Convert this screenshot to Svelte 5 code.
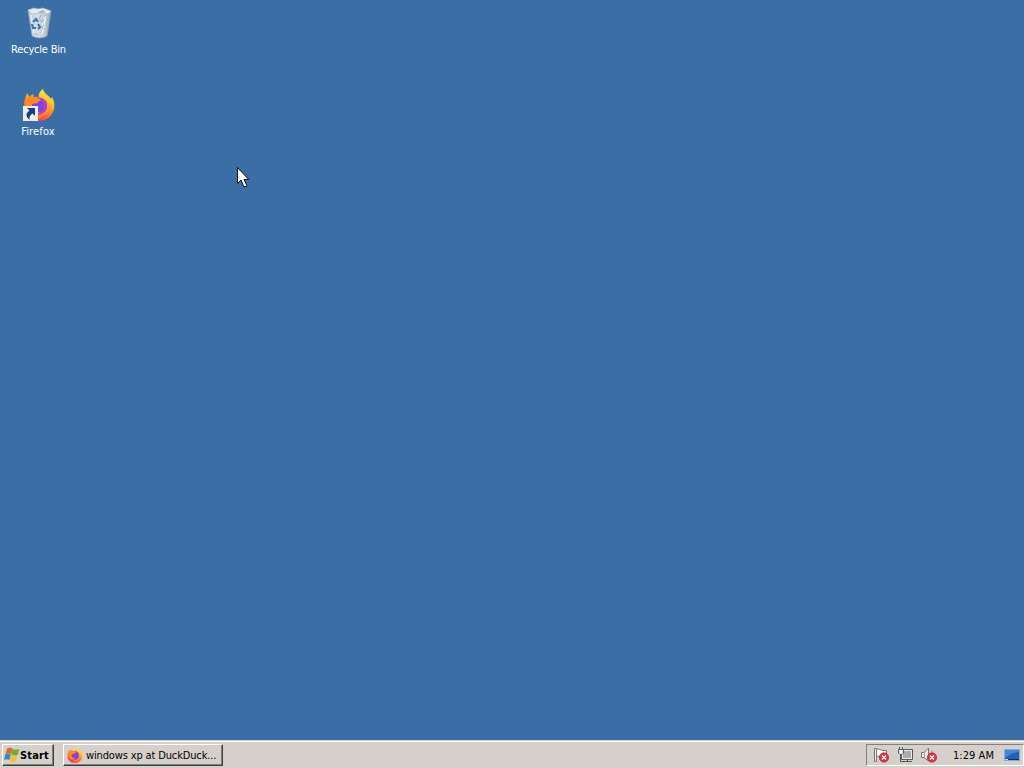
<script>
  let time = $state('1:29 AM');
</script>

{#snippet firefox(size)}
  <svg class="firefox" width={size} height={size} viewBox="0 0 32 32">
    <defs>
      <linearGradient id="flame{size}" x1=".8" y1="0" x2=".3" y2="1">
        <stop offset="0" stop-color="#fff04a" />
        <stop offset=".35" stop-color="#ffbd2b" />
        <stop offset=".62" stop-color="#ff7a2d" />
        <stop offset="1" stop-color="#ef2a62" />
      </linearGradient>
    </defs>
    <path fill="url(#flame{size})" d="M3 7C4 4 5 4 6 8L10 5L11 9C13 7 15 8 16 9C15 5 17 2 20 0C21 5 26 6 28 10L29 8C32 13 32 19 30 23C27 29 22 32 16 32C7 32 0 25 1 17C1 12 2 10 3 7Z" />
    <path fill="#ff9a28" d="M22 10C27 15 27 22 22 26C19 29 15 30 11 29C17 28 22 23 22 17Z" opacity=".75" />
    <path fill="#7d45dc" d="M12 9C19 7 24 11 24 17C24 22 20 25 16 25C11 25 8 21 8 17Q8 12 12 9Z" />
    <path fill="#b53bd7" d="M13 9C19 8 24 12 24 17C24 22 20 25 16 25L21 20C22 15 19 11 13 9Z" />
    <path fill="#ff8b20" d="M2 9L6 8L10 5L11 9C14 8 16 9 18 11L14 14L9 15C9 20 12 23 17 23C13 27 6 25 3 20Z" />
  </svg>
{/snippet}

{#snippet errorBadge()}
  <circle cx="11" cy="10.5" r="4.7" fill="#d93341" stroke="#b82632" stroke-width=".7" />
  <path d="M9 8.5L13 12.5M13 8.5L9 12.5" stroke="#fff" stroke-width="1.5" />
{/snippet}

<div class="desktop">
  <main>
    <div class="shortcut">
      <svg width="32" height="32" viewBox="0 0 32 32">
        <defs>
          <linearGradient id="bin" x1="0" x2="1">
            <stop offset="0" stop-color="#b9cbd8" />
            <stop offset=".4" stop-color="#d5e0e6" />
            <stop offset=".75" stop-color="#bac9d2" />
            <stop offset="1" stop-color="#8fa8b9" />
          </linearGradient>
        </defs>
        <path d="M5 3L28 4L24 29Q17 33 9 29Z" fill="url(#bin)" stroke="#8ca8bd" stroke-width=".8" />
        <path d="M5 3L11 1L15 2L20 1L28 4L25 7L18 6L9 7Z" fill="#e5ecee" stroke="#a6b9c5" stroke-width=".7" />
        <path d="M10 3L15 5L20 3L23 5L17 6Z" fill="#a5b5bf" />
        <path d="M8 8L11 27M23 9L19 28M20 10L23 13L19 17L22 20M13 23L17 20L20 25" stroke="#f1f5f6" fill="none" />
        <path d="M18 8L16 12L20 15M21 18L18 23M11 26L15 28" stroke="#889fae" fill="none" opacity=".65" />
        <g fill="none" stroke="#3e70b6" stroke-width="2.2">
          <path d="M10 15L13 12L15 15" />
          <path d="M9 17L10 21L13 21" />
          <path d="M15 17L17 20L15 22" />
        </g>
      </svg>
      <span class="bin-label">Recycle Bin</span>
    </div>
    <div class="shortcut">
      <div class="app-icon">
        {@render firefox(32)}
        <svg class="link" width="15" height="15" viewBox="0 0 15 15">
          <path fill="#eceef2" d="M0 0H15V15H0Z" />
          <path fill="#163e80" d="M4 2H12V10L9.5 7.5C7 9 6 11 6.5 14C2 10 3 7 6.5 4.8Z" />
        </svg>
      </div>
      <span class="fox-label">Firefox</span>
    </div>
    <svg class="cursor" width="13" height="22" viewBox="0 0 13 22">
      <path d="M.5 .5V16.5L4 13L7 20L10 19L7 12.5H11.7Z" fill="#fff" stroke="#071321" />
    </svg>
  </main>

  <footer>
    <button class="start">
      <svg width="16" height="16" viewBox="0 0 16 16">
        <path fill="#e26a25" d="M3 1.5C5 .2 6.8 .5 8.6 1.6L7.2 7C5 6 3.4 6 1.5 7Z" />
        <path fill="#70ad38" d="M8.8 2C11 3.1 13 3 15.5 2L13.8 8C11.5 9 9.6 8.6 7.3 7.3Z" />
        <path fill="#3c88c5" d="M1.3 7.3C3 6.3 5.1 6.4 6.9 7.5L5.3 13C3.4 12 1.8 12 0 13Z" />
        <path fill="#f3c238" d="M7.1 7.8C9 8.9 11 9.2 13.5 8.3L11.8 14.3C9.4 15.3 7.7 15 5.5 13.7Z" />
      </svg>
      <span>Start</span>
    </button>
    <button class="task">
      {@render firefox(16)}
      <span>windows xp at DuckDuck...</span>
    </button>
    <section class="tray">
      <svg width="16" height="16" viewBox="0 0 16 16">
        <path d="M1.5 1.5V14.5H3.5V1.5Z" fill="#eee" stroke="#747474" />
        <path d="M3.5 2.5C6 1 8 3.5 10 3.5H13.5V10H9C7 10 5 8.5 3.5 9.5Z" fill="#fff" stroke="#777" />
        {@render errorBadge()}
      </svg>
      <svg width="16" height="16" viewBox="0 0 16 16">
        <path d="M4.5 2.5H15.5V12.5H4.5Z" fill="#8b9290" stroke="#555957" />
        <path d="M5.5 3.5H14.5V11.5H5.5Z" fill="#a7adab" stroke="#eee" />
        <path d="M6 14.5H15M10.5 12V15M3.5 7V14.5H6" stroke="#555" fill="none" />
        <path d="M1.5 2.5H6.5V6L5 7.5H3L1.5 6Z" fill="#eee" stroke="#555" />
        <path d="M2.5 0V3M5.5 0V3" stroke="#555" />
      </svg>
      <svg width="16" height="16" viewBox="0 0 16 16">
        <path d="M.5 5.5H3L7.5 1V14L3 10.5H.5Z" fill="#eee" stroke="#777" />
        <path d="M3.5 5.5V10.5" stroke="#999" />
        <path d="M10 3Q12 5 12 7" fill="none" stroke="#999" />
        {@render errorBadge()}
      </svg>
      <time>{time}</time>
      <svg class="show-desktop" width="16" height="16" viewBox="0 0 16 16">
        <path d="M.5 2.5H15.5V13.5H.5Z" fill="#245eb5" stroke="#83a9d5" />
        <path d="M1 3H15V5C10 5 5 8 1 11Z" fill="#4686d0" />
        <path d="M1 12H15V13H1Z" fill="#172f56" />
        <path d="M1 12H4V13H1Z" fill="#bce0e2" />
      </svg>
    </section>
  </footer>
</div>

<style>
  :global(body) { margin: 0; overflow: hidden; }
  .desktop {
    width: 1024px;
    height: 768px;
    display: flex;
    flex-direction: column;
    background: #3b6ea5;
    font: 11px/13px Tahoma, "DejaVu Sans Condensed", "DejaVu Sans", sans-serif;
    font-stretch: condensed;
    cursor: default;
  }
  main { flex: 1; position: relative; padding-top: 7px; }
  svg { display: block; flex: none; }
  .shortcut {
    width: 76px;
    height: 82px;
    display: flex;
    flex-direction: column;
    align-items: center;
    color: #fff;
    white-space: nowrap;
  }
  .shortcut > svg, .app-icon { margin-left: 2px; }
  .shortcut span { margin-top: 4px; }
  .bin-label { letter-spacing: -.2px; padding-left: 1px; }
  .fox-label { letter-spacing: .15px; }
  .app-icon { position: relative; width: 32px; height: 32px; }
  .link { position: absolute; left: 0; bottom: 0; }
  .cursor { position: absolute; left: 237px; top: 167px; }
  footer {
    height: 28px;
    box-sizing: border-box;
    display: flex;
    align-items: flex-start;
    padding: 3px 0 0 2px;
    background: #d6d0ca;
    border-top: 1px solid #d6d0ca;
    box-shadow: inset 0 1px #fff;
  }
  button {
    height: 22px;
    box-sizing: border-box;
    display: flex;
    align-items: center;
    margin: 0;
    padding: 0 2px;
    border: 1px solid;
    border-color: #fff #404040 #404040 #fff;
    box-shadow: inset -1px -1px #808080;
    background: #d6d0ca;
    color: #000;
    font: inherit;
    white-space: nowrap;
    cursor: default;
  }
  .start { width: 52px; padding-left: 1px; font-weight: bold; letter-spacing: .15px; }
  .start span { margin-left: 0; }
  .task { width: 160px; margin-left: 9px; padding-left: 3px; }
  .task span { margin-left: 3px; letter-spacing: -.14px; }
  .tray {
    width: 158px;
    height: 22px;
    box-sizing: border-box;
    display: flex;
    align-items: center;
    gap: 8px;
    margin-left: auto;
    padding-left: 6px;
    border: 1px solid;
    border-color: #808080 #fff #fff #808080;
  }
  time { width: 43px; margin-left: 8px; letter-spacing: .05px; white-space: nowrap; }
  .show-desktop { margin-left: 0; }
</style>
